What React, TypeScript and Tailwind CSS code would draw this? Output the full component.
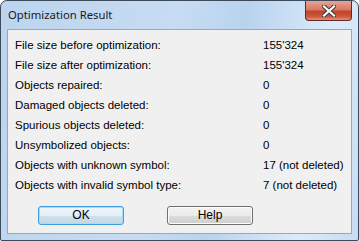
import React from "react";

const rows: [string, string][] = [
  ["File size before optimization:", "155'324"],
  ["File size after optimization:", "155'324"],
  ["Objects repaired:", "0"],
  ["Damaged objects deleted:", "0"],
  ["Spurious objects deleted:", "0"],
  ["Unsymbolized objects:", "0"],
  ["Objects with unknown symbol:", "17 (not deleted)"],
  ["Objects with invalid symbol type:", "7 (not deleted)"],
];

export default function App() {
  return (
    <div
      className="relative w-[359px] h-[241px] border border-[#3c4a5a] rounded-t-[7px] rounded-b-[2px] flex flex-col px-[6px] pb-[6px] bg-[linear-gradient(100deg,#bcd4ee_0%,#c7dcf3_45%,#b9d3ee_62%,#dcebfa_85%,#c6dcf2_100%)]"
      style={{ fontFamily: '"Liberation Sans", Arial, sans-serif' }}
    >
      <div className="h-[28px] flex items-start">
        <span
          className="pl-[1px] pt-[6px] text-[11.3px] leading-[16px] text-[#1a1a1a]"
          style={{ fontFamily: '"Noto Sans", "Liberation Sans", sans-serif' }}
        >
          Optimization Result
        </span>
      </div>
      <div className="absolute right-[6px] top-0 w-[47px] h-[20px] rounded-b-[4px] border border-[#5e2a22] border-t-0 bg-[linear-gradient(180deg,#e8a493_0%,#d97a64_45%,#c2452c_55%,#c8553b_80%,#e2917a_100%)] flex items-center justify-center">
        <svg width="14" height="12" viewBox="0 0 14 12">
          <path
            d="M2 1.5 L12 10.5 M12 1.5 L2 10.5"
            stroke="#3a3a3a"
            strokeWidth="4.2"
            strokeLinecap="square"
          />
          <path
            d="M2 1.5 L12 10.5 M12 1.5 L2 10.5"
            stroke="#ffffff"
            strokeWidth="2.2"
            strokeLinecap="square"
          />
        </svg>
      </div>
      <div className="flex-1 border border-[#9aa7b5] bg-[#f0f0f0] flex flex-col pl-[7px] pt-[6px]">
        {rows.map(([l, v]) => (
          <div key={l} className="flex h-[20px] items-center text-[11.5px] text-[#000000]">
            <div className="w-[248px]">{l}</div>
            <div>{v}</div>
          </div>
        ))}
        <div className="flex mt-[10px] pl-[23px] gap-[43px]">
          <button className="w-[86px] h-[19px] rounded-[3px] border border-[#3c9ee0] shadow-[inset_0_0_0_1px_#a8dcf8] bg-[linear-gradient(180deg,#eef6fb_0%,#e4eff6_50%,#cfe2ed_51%,#c3d7e4_100%)] text-[12px] text-[#000000] leading-[17px]">
            OK
          </button>
          <button className="w-[86px] h-[19px] rounded-[3px] border border-[#707070] shadow-[inset_0_0_0_1px_#fbfbfb] bg-[linear-gradient(180deg,#f3f3f3_0%,#ebebeb_50%,#dddddd_51%,#cfcfcf_100%)] text-[12px] text-[#000000] leading-[17px]">
            Help
          </button>
        </div>
      </div>
    </div>
  );
}
